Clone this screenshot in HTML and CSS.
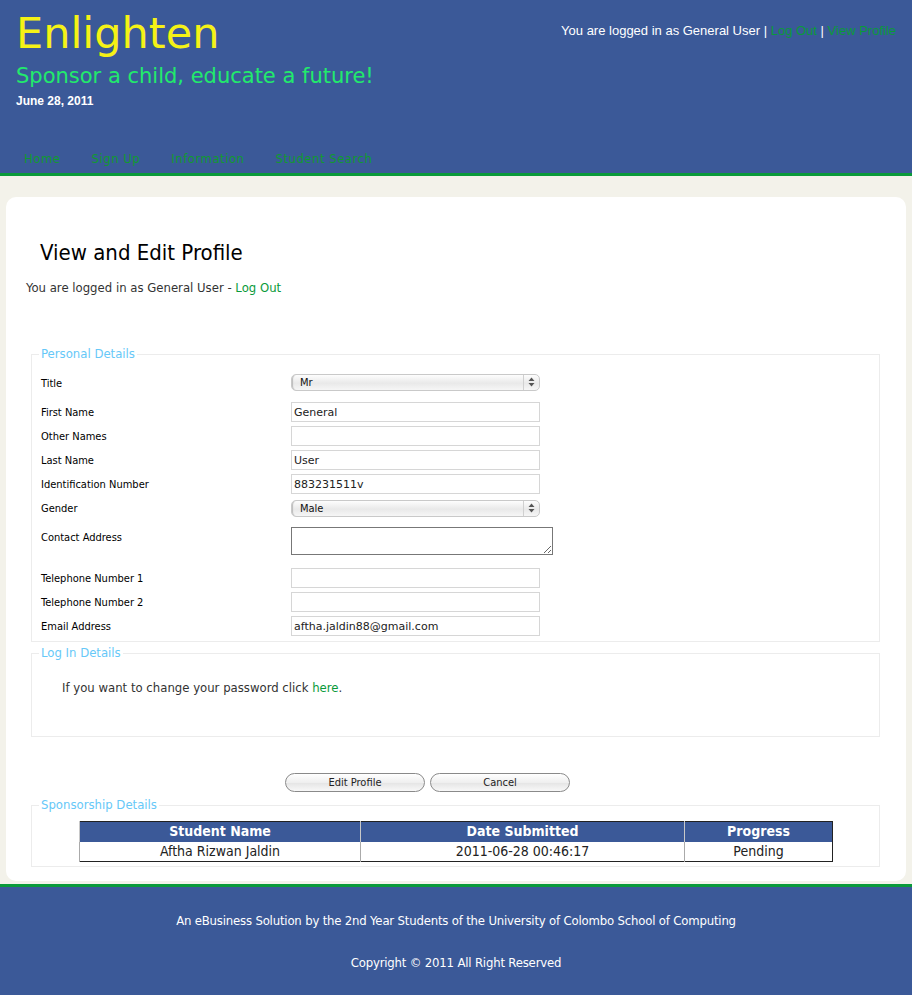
FILE: index.html
```html
<!DOCTYPE html>
<html>
<head>
<meta charset="utf-8">
<title>Enlighten - View and Edit Profile</title>
<link rel="stylesheet" href="styles.css">
</head>
<body>
<header class="header">
  <div class="header-top">
    <div class="brand">
      <div class="logo">Enlighten</div>
      <div class="tagline">Sponsor a child, educate a future!</div>
      <div class="date">June 28, 2011</div>
    </div>
    <div class="userbar">You are logged in as General User <span class="sep">|</span> <a href="#">Log Out</a> <span class="sep">|</span> <a href="#">View Profile</a></div>
  </div>
  <nav class="nav">
    <a href="#">Home</a>
    <a href="#">Sign Up</a>
    <a href="#">Information</a>
    <a href="#">Student Search</a>
  </nav>
</header>

<main class="card">
  <h1 class="page-title">View and Edit Profile</h1>
  <p class="login-note">You are logged in as General User - <a href="#">Log Out</a></p>

  <form class="profile-form">
    <fieldset class="group personal">
      <legend>Personal Details</legend>
      <div class="row row-title">
        <label>Title</label>
        <div class="select-wrap">
          <select><option>Mr</option></select>
          <span class="arrows"><svg width="7" height="10" viewBox="0 0 7 10"><path d="M3.5 0.5 L6.5 4 L0.5 4 Z M3.5 9.5 L6.5 6 L0.5 6 Z" fill="#555"/></svg></span>
        </div>
      </div>
      <div class="row"><label>First Name</label><input type="text" value="General"></div>
      <div class="row"><label>Other Names</label><input type="text" value=""></div>
      <div class="row"><label>Last Name</label><input type="text" value="User"></div>
      <div class="row"><label>Identification Number</label><input type="text" value="883231511v"></div>
      <div class="row">
        <label>Gender</label>
        <div class="select-wrap">
          <select><option>Male</option></select>
          <span class="arrows"><svg width="7" height="10" viewBox="0 0 7 10"><path d="M3.5 0.5 L6.5 4 L0.5 4 Z M3.5 9.5 L6.5 6 L0.5 6 Z" fill="#555"/></svg></span>
        </div>
      </div>
      <div class="row row-area"><label>Contact Address</label><textarea></textarea></div>
      <div class="row"><label>Telephone Number 1</label><input type="text" value=""></div>
      <div class="row"><label>Telephone Number 2</label><input type="text" value=""></div>
      <div class="row"><label>Email Address</label><input type="text" value="aftha.jaldin88@gmail.com"></div>
    </fieldset>

    <fieldset class="group login">
      <legend>Log In Details</legend>
      <p>If you want to change your password click <a href="#">here</a>.</p>
    </fieldset>

    <div class="buttons">
      <button type="button">Edit Profile</button>
      <button type="button">Cancel</button>
    </div>

    <fieldset class="group sponsor">
      <legend>Sponsorship Details</legend>
      <table class="sp-table">
        <thead>
          <tr><th class="c1">Student Name</th><th class="c2">Date Submitted</th><th class="c3">Progress</th></tr>
        </thead>
        <tbody>
          <tr><td>Aftha Rizwan Jaldin</td><td>2011-06-28 00:46:17</td><td>Pending</td></tr>
        </tbody>
      </table>
    </fieldset>
  </form>
</main>

<footer class="footer">
  <p>An eBusiness Solution by the 2nd Year Students of the University of Colombo School of Computing</p>
  <p>Copyright © 2011 All Right Reserved</p>
</footer>
</body>
</html>
```

FILE: styles.css
```css
* { box-sizing: border-box; }

body {
  margin: 0;
  background: #f3f2ea;
  font-family: "DejaVu Sans Condensed", "DejaVu Sans", sans-serif;
  font-stretch: condensed;
  color: #333;
}

a { color: #0a9a3a; text-decoration: none; }

.header {
  background: #3b5998;
  height: 176px;
  border-bottom: 3px solid #0a9a3a;
  display: flex;
  flex-direction: column;
}

.header-top {
  display: flex;
  justify-content: space-between;
  align-items: flex-start;
  padding: 8px 16px 0 16px;
}

.logo {
  font-family: "DejaVu Sans", sans-serif;
  font-stretch: normal;
  font-size: 43px;
  line-height: 50px;
  color: #f5f216;
}

.tagline {
  font-family: "DejaVu Sans", sans-serif;
  font-stretch: normal;
  font-size: 21px;
  line-height: 26px;
  color: #22ea6c;
  margin-top: 5px;
}

.date {
  font-family: "Liberation Sans", Arial, sans-serif;
  font-size: 12px;
  line-height: 16px;
  color: #fff;
  font-weight: bold;
  margin-top: 4px;
}

.userbar {
  font-family: "Liberation Sans", Arial, sans-serif;
  font-size: 13px;
  line-height: 16px;
  color: #fff;
  margin-top: 15px;
}
.userbar .sep { color: #fff; }

.nav {
  margin-top: auto;
  display: flex;
  gap: 31px;
  padding: 0 0 6px 24px;
  font-size: 13px;
  line-height: 16px;
  letter-spacing: 0.5px;
}
.nav a { color: #109a30; }

.card {
  display: block;
  background: #fff;
  margin: 21px 6px 3px 6px;
  border-radius: 10px;
  padding: 43px 26px 14px 20px;
}

.page-title {
  margin: 0 0 0 14px;
  font-size: 22px;
  line-height: 26px;
  font-weight: normal;
  color: #000;
}

.login-note {
  margin: 14px 0 0 0;
  font-size: 13px;
  line-height: 16px;
  color: #333;
}

.profile-form { margin: 50px 0 0 5px; }

.group {
  margin: 0;
  border: 1px solid #ececec;
  padding: 8px 9px 3px 9px;
  min-width: 0;
}

.group legend {
  color: #66c8f8;
  font-size: 13px;
  line-height: 16px;
  padding: 0 2px;
  margin-left: -2px;
}

.row {
  display: flex;
  align-items: center;
  height: 24px;
  font-size: 11px;
  color: #000;
}
.row label { width: 250px; flex: none; padding-top: 1px; }
.row-title { margin-bottom: 6px; }
.row-title label { padding-top: 3px; }

.row input {
  width: 249px;
  height: 20px;
  border: 1px solid #d6d6d6;
  padding: 0 2px;
  font-family: "DejaVu Sans", sans-serif;
  font-stretch: normal;
  font-size: 11px;
  color: #222;
  outline: none;
}

.select-wrap {
  position: relative;
  width: 249px;
  height: 17px;
}
.select-wrap select {
  appearance: none;
  -webkit-appearance: none;
  width: 100%;
  height: 17px;
  border: 1px solid #c9c9c9;
  border-radius: 5px;
  background: linear-gradient(#fdfdfd, #e9e9e9 55%, #f6f6f6);
  font-family: "DejaVu Sans Condensed", "DejaVu Sans", sans-serif;
  font-stretch: condensed;
  font-size: 11px;
  color: #111;
  padding: 0 0 0 8px;
  box-shadow: inset 2px 0 1px -1px #bbb;
}
.select-wrap .arrows {
  position: absolute;
  right: 1px;
  top: 1px;
  width: 16px;
  height: 15px;
  border-left: 1px solid #d0d0d0;
  display: flex;
  align-items: center;
  justify-content: center;
  pointer-events: none;
}

.row-area {
  height: 46px;
  align-items: flex-start;
  padding-top: 7px;
}
.row-area label { padding-top: 4px; line-height: 14px; }
.row-area textarea {
  width: 262px;
  height: 28px;
  border: 1px solid #777;
  resize: both;
  font-size: 11px;
}

.login {
  margin-top: 3px;
  padding: 19px 9px 40px 9px;
}
.login p {
  margin: 0 0 0 21px;
  font-size: 13px;
  line-height: 16px;
  color: #333;
}

.buttons {
  display: flex;
  gap: 5px;
  padding-left: 254px;
  margin-top: 36px;
}
.buttons button {
  width: 140px;
  height: 19px;
  border: 1px solid #8a8a8a;
  border-radius: 10px;
  background: linear-gradient(#ffffff, #efefef 50%, #e4e4e4 51%, #f8f8f8);
  font-family: "DejaVu Sans Condensed", "DejaVu Sans", sans-serif;
  font-stretch: condensed;
  font-size: 11px;
  color: #222;
  padding: 0;
  line-height: 17px;
}

.sponsor {
  margin-top: 5px;
  padding: 8px 9px 4px 9px;
}

.sp-table {
  width: 754px;
  margin-left: 38px;
  border-collapse: collapse;
  border: 1px solid #222;
  font-size: 14px;
  line-height: 18px;
}
.sp-table th {
  background: #3b5998;
  color: #fff;
  font-weight: bold;
  height: 20px;
  padding: 0;
  line-height: 17px;
  border-left: 1px solid #c8c8c8;
}
.sp-table td {
  height: 20px;
  padding: 0;
  text-align: center;
  color: #222;
  border-left: 1px solid #aaa;
}
.sp-table th.c1 { width: 281px; }
.sp-table th.c2 { width: 324px; }

.footer {
  background: #3b5998;
  border-top: 3px solid #0a9a3a;
  padding: 26px 0 24px 0;
  text-align: center;
  color: #fff;
  font-size: 13px;
  line-height: 16px;
  letter-spacing: -0.18px;
}
.footer p { margin: 0; }
.footer p + p { margin-top: 26px; }
```
